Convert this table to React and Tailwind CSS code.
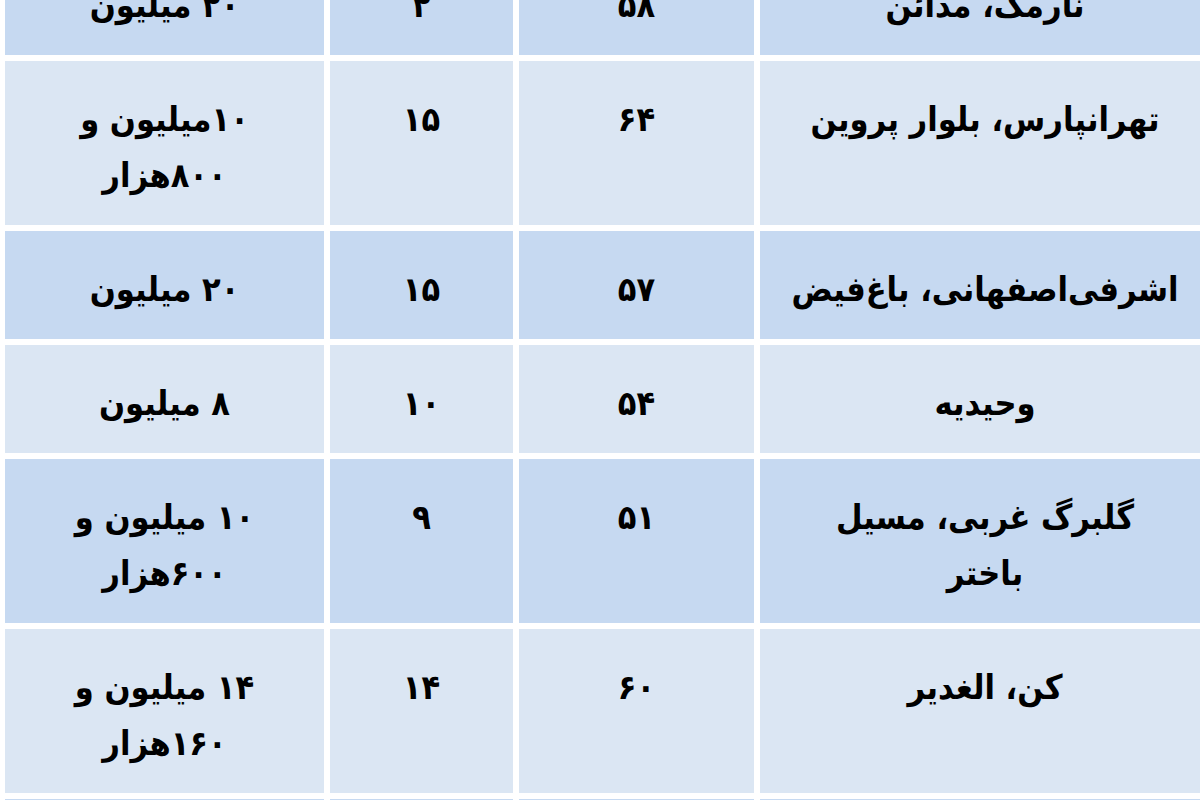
const rows = [
  { tone: "dark", place: ["نارمک، مدائن"], area: "۵۸", count: "۲", price: ["۲۰ میلیون"] },
  { tone: "light", place: ["تهرانپارس، بلوار پروین"], area: "۶۴", count: "۱۵", price: ["۱۰میلیون و", "۸۰۰هزار"] },
  { tone: "dark", place: ["اشرفی‌اصفهانی، باغ‌فیض"], area: "۵۷", count: "۱۵", price: ["۲۰ میلیون"] },
  { tone: "light", place: ["وحیدیه"], area: "۵۴", count: "۱۰", price: ["۸ میلیون"] },
  { tone: "dark", place: ["گلبرگ غربی، مسیل", "باختر"], area: "۵۱", count: "۹", price: ["۱۰ میلیون و", "۶۰۰هزار"] },
  { tone: "light", place: ["کن، الغدیر"], area: "۶۰", count: "۱۴", price: ["۱۴ میلیون و", "۱۶۰هزار"] },
  { tone: "dark", place: ["\u00a0"], area: "\u00a0", count: "\u00a0", price: ["\u00a0"] },
];

function Cell({ tone, lines }) {
  return (
    <div
      className={
        tone === "dark"
          ? "bg-[#c6d9f1] pt-[30px] pb-[22px] text-center"
          : "bg-[#dbe6f3] pt-[30px] pb-[22px] text-center"
      }
    >
      {lines.map((l, i) => (
        <div key={i} className="whitespace-nowrap">{l}</div>
      ))}
    </div>
  );
}

export default function App() {
  return (
    <div className="w-[1200px] h-[800px] overflow-hidden bg-white">
      <div className="w-[1210px] pl-[5px]">
        <div
          dir="rtl"
          className="mt-[-53px] grid grid-cols-[1fr_235px_183px_319px] gap-[6px] font-['DejaVu_Sans_Condensed','DejaVu_Sans',sans-serif] text-[34px] leading-[56px] font-bold text-black"
        >
          {rows.map((r, i) => (
            <div key={i} className="contents">
              <Cell tone={r.tone} lines={r.place} />
              <Cell tone={r.tone} lines={[r.area]} />
              <Cell tone={r.tone} lines={[r.count]} />
              <Cell tone={r.tone} lines={r.price} />
            </div>
          ))}
        </div>
      </div>
    </div>
  );
}
